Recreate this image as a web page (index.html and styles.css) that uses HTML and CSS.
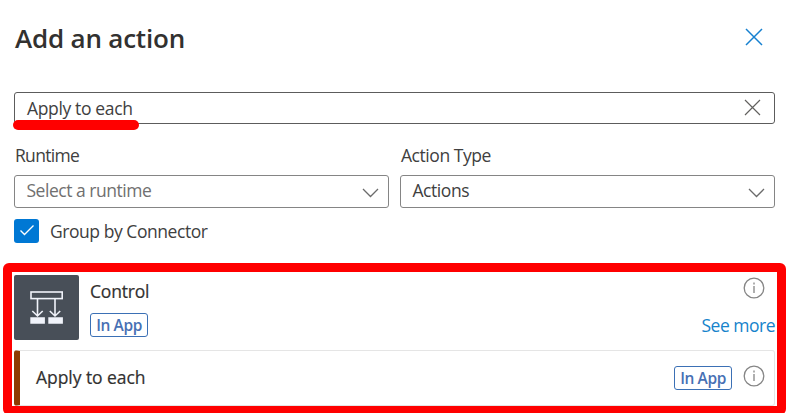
FILE: index.html
```
<!DOCTYPE html>
<html lang="en">
<head>
<meta charset="utf-8">
<title>Add an action</title>
<link rel="stylesheet" href="styles.css">
</head>
<body>
<main class="panel">
  <header class="header">
    <h1 class="title">Add an action</h1>
    <svg class="close" width="18" height="18" viewBox="0 0 18 18"><path d="M1 1L17 17M17 1L1 17"/></svg>
  </header>
  <div class="search">
    <span class="query">Apply to each</span>
    <svg class="clear" width="17" height="17" viewBox="0 0 17 17"><path d="M1 1L16 16M16 1L1 16"/></svg>
    <span class="underline"></span>
  </div>
  <div class="filters">
    <div class="field">
      <span class="label runtime">Runtime</span>
      <div class="select"><span class="placeholder">Select a runtime</span><svg class="chevron" width="17" height="10" viewBox="0 0 17 10"><path d="M1 1L8.5 8.5L16 1"/></svg></div>
    </div>
    <div class="field">
      <span class="label type">Action Type</span>
      <div class="select"><span class="value">Actions</span><svg class="chevron" width="17" height="10" viewBox="0 0 17 10"><path d="M1 1L8.5 8.5L16 1"/></svg></div>
    </div>
  </div>
  <div class="group">
    <span class="checkbox"><svg width="25" height="24" viewBox="0 0 25 24"><path d="M6.5 11.5L10.5 15.5L19.5 6.5"/></svg></span>
    <span class="group-label">Group by Connector</span>
  </div>
  <section class="results">
    <div class="connector">
      <svg class="tile" width="65" height="65" viewBox="0 0 65 65">
        <rect width="65" height="65" rx="2" fill="#484f58"/>
        <g fill="none" stroke="#f0f3fa" stroke-width="1.6"><rect x="17" y="17" width="31.2" height="6.6"/><path d="M23.5 24V41M41 24V41M18.3 36L23.5 41L28.7 36M35.8 36L41 41L46.2 36"/></g>
        <path fill="#f0f3fa" d="M16.3 42.3h14.6v6.5H16.3zM34.3 42.3h14.6v6.5H34.3z"/>
      </svg>
      <div class="connector-text">
        <span class="name">Control</span>
        <span class="badge">In App</span>
      </div>
      <div class="side">
        <svg class="info" width="22" height="22" viewBox="0 0 22 22"><circle cx="11" cy="11" r="9.8"/><path d="M11 9V16M11 5.5V7.5"/></svg>
        <a class="more">See more</a>
      </div>
    </div>
    <div class="action">
      <span class="action-name">Apply to each</span>
      <span class="badge">In App</span>
      <svg class="info" width="22" height="22" viewBox="0 0 22 22"><circle cx="11" cy="11" r="9.8"/><path d="M11 9V16M11 5.5V7.5"/></svg>
    </div>
  </section>
  <div class="highlight"></div>
</main>
</body>
</html>
```
FILE: styles.css
```
* { box-sizing: border-box; }
body { margin: 0; background: #fff; overflow: hidden; font-family: "Open Sans", "Noto Sans", sans-serif; font-size: 17.5px; line-height: 24px; color: #404040; white-space: nowrap; }
svg { display: block; flex: none; fill: none; }
.panel { position: relative; height: 413px; overflow: hidden; padding: 20px 12px 0 14px; }
.header { display: flex; height: 72px; padding: 0 12px 0 1px; justify-content: space-between; }
.title { margin: 0; font-size: 26px; line-height: 36px; font-weight: 600; letter-spacing: -.2px; color: #323130; }
.close { margin-top: 8px; stroke: #1680d0; stroke-width: 1.5; }
.search { position: relative; display: flex; align-items: center; justify-content: space-between; height: 32px; padding: 0 13px 0 12px; border: 1px solid #5c5c5c; border-radius: 3px; }
.query { letter-spacing: -.35px; }
.clear { margin-top: -2px; stroke: #62615f; stroke-width: 1.2; }
.underline { position: absolute; left: -2px; top: 27px; width: 126px; height: 10px; border-radius: 5px; background: #f00; }
.filters { display: grid; grid-template-columns: 375px 375px; gap: 11px; margin-top: 20px; }
.label { display: block; height: 31px; line-height: 22px; padding-left: 1px; }
.runtime { letter-spacing: -.7px; }
.type { letter-spacing: -.45px; }
.select { display: flex; align-items: center; justify-content: space-between; height: 33px; padding: 0 9px 3px 11.5px; border: 1px solid #858585; border-radius: 3px; }
.chevron { margin-top: 6px; stroke: #6b6b6b; stroke-width: 1.3; }
.placeholder { color: #707070; letter-spacing: -.48px; }
.value { letter-spacing: -.45px; }
.group { display: flex; align-items: center; gap: 11px; height: 24px; margin-top: 11px; }
.group-label { letter-spacing: -.45px; }
.checkbox { width: 25px; height: 24px; border-radius: 3px; background: #0078d4; }
.checkbox path { stroke: #fff; stroke-width: 1.4; }
.results { margin-top: 32px; }
.connector { display: flex; height: 75px; }
.connector-text { padding: 4px 0 0 11px; }
.name { display: block; height: 34px; color: #323130; letter-spacing: -.2px; -webkit-text-stroke: .2px; }
.badge { display: block; width: 58px; height: 24px; line-height: 22px; border: 1px solid #3b70b5; border-radius: 3px; text-align: center; font-size: 15.5px; font-weight: 600; letter-spacing: -.4px; color: #4770b4; }
.side { margin-left: auto; display: flex; flex-direction: column; align-items: flex-end; gap: 14px; padding-top: 2px; }
.side .info { margin-right: 10px; }
.info { stroke: #858585; stroke-width: 1.3; }
.more { letter-spacing: -.5px; color: #1683cb; }
.action { display: flex; align-items: center; height: 56px; padding: 0 9px 0 16px; border: 1px solid #e5e5e5; border-left: 6px solid #8f3b02; border-radius: 3px; }
.action-name { margin-top: -2px; color: #323130; letter-spacing: -.05px; -webkit-text-stroke: .2px; }
.action .badge { margin-left: auto; margin-right: 11px; }
.action .info { margin-top: -4px; }
.highlight { position: absolute; left: 3px; top: 263px; width: 783px; height: 152px; border: 9px solid #f00; border-radius: 6px; }
```
